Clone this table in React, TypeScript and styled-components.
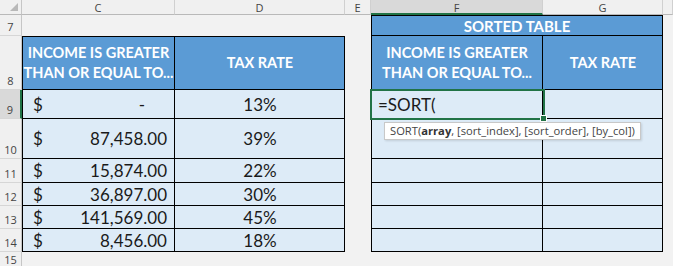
import { Fragment } from "react";
import styled, { createGlobalStyle } from "styled-components";

const GlobalStyle = createGlobalStyle`
  html, body {
    margin: 0;
    padding: 0;
    background: #f2f2f2;
  }
`;

const GREEN = "#217346";

const Sheet = styled.div`
  display: grid;
  grid-template-columns: 22px 153px 170px 26px 172px 120px 1fr;
  grid-template-rows: 15px 21px 54px 29px 40px 24px 23px 23px 23px 1fr;
  width: 673px;
  height: 266px;
  overflow: hidden;
  background: #f2f2f2;
  font-family: Lato, "Open Sans", sans-serif;
`;

const Corner = styled.div`
  background: #f0f0f0;
  border-right: 1px solid #c6c6c6;
  border-bottom: 1px solid #b9b9b9;
  position: relative;
  &::after {
    content: "";
    position: absolute;
    right: 3px;
    bottom: 3px;
    border-left: 8px solid transparent;
    border-bottom: 8px solid #b8b8b8;
  }
`;

const ColHead = styled.div<{ $sel?: boolean }>`
  display: flex;
  align-items: center;
  justify-content: center;
  font-family: "Open Sans", sans-serif;
  font-size: 11px;
  color: #444;
  background: ${(p) => (p.$sel ? "#d9d9d9" : "#f0f0f0")};
  border-right: 1px solid #d0d0d0;
  border-bottom: ${(p) => (p.$sel ? `2px solid ${GREEN}` : "1px solid #b9b9b9")};
  box-sizing: border-box;
  padding-top: ${(p) => (p.$sel ? "1px" : "0")};
`;

const RowHead = styled.div<{ $sel?: boolean }>`
  display: flex;
  align-items: flex-end;
  justify-content: center;
  padding-bottom: 1px;
  font-family: "Open Sans", sans-serif;
  font-size: 11px;
  color: #444;
  background: ${(p) => (p.$sel ? "#d9d9d9" : "#f0f0f0")};
  border-right: ${(p) => (p.$sel ? `2px solid ${GREEN}` : "1px solid #c6c6c6")};
  border-bottom: 1px solid #d6d6d6;
  box-sizing: border-box;
`;

const Blank = styled.div<{ $span?: number }>`
  grid-column: span ${(p) => p.$span ?? 1};
`;

const Cell = styled.div<{
  $head?: boolean;
  $top?: boolean;
  $left?: boolean;
  $span?: number;
  $align?: "center" | "split" | "left";
}>`
  grid-column: span ${(p) => p.$span ?? 1};
  position: relative;
  display: flex;
  align-items: center;
  justify-content: ${(p) =>
    p.$align === "split" ? "space-between" : p.$align === "left" ? "flex-start" : "center"};
  padding: 0 ${(p) => (p.$align === "center" || !p.$align ? "2px" : "8px 0 11px")};
  box-sizing: border-box;
  background: ${(p) => (p.$head ? "#5b9bd5" : "#ddebf7")};
  color: ${(p) => (p.$head ? "#fff" : "#1a1a1a")};
  font-weight: ${(p) => (p.$head ? 700 : 400)};
  font-size: ${(p) => (p.$head ? "14.5px" : "17px")};
  line-height: 20px;
  white-space: nowrap;
  text-align: center;
  box-shadow: inset -1px -1px 0 #000
    ${(p) => (p.$top ? ", inset 0 1px 0 #000" : "")}
    ${(p) => (p.$left ? ", inset 1px 0 0 #000" : "")};
`;

const Title = styled.span`
  font-size: 15px;
`;

const Dollar = styled.span``;
const Amount = styled.span<{ $dash?: boolean }>`
  margin-right: ${(p) => (p.$dash ? "22px" : "0")};
`;

const Active = styled.div`
  position: absolute;
  left: -1px;
  top: -1px;
  right: -2px;
  bottom: -1px;
  border: 2px solid ${GREEN};
  z-index: 2;
  &::after {
    content: "";
    position: absolute;
    right: -4px;
    bottom: -4px;
    width: 5px;
    height: 5px;
    background: ${GREEN};
    border: 1px solid #fff;
  }
`;

const Formula = styled.span`
  position: relative;
  z-index: 3;
  margin-left: -4px;
`;

const Tip = styled.div`
  position: absolute;
  left: 13px;
  top: 32px;
  z-index: 4;
  background: #fff;
  border: 1px solid #c8c8c8;
  box-shadow: 1px 1px 2px rgba(0, 0, 0, 0.12);
  padding: 0 5px 1px;
  font-family: "Open Sans", sans-serif;
  font-size: 11.2px;
  line-height: 15px;
  color: #444;
  font-weight: 400;
  white-space: nowrap;
  b {
    font-weight: 700;
    color: #333;
  }
`;

interface Row {
  n: number;
  amount: string;
  rate: string;
}

const rows: Row[] = [
  { n: 9, amount: "-", rate: "13%" },
  { n: 10, amount: "87,458.00", rate: "39%" },
  { n: 11, amount: "15,874.00", rate: "22%" },
  { n: 12, amount: "36,897.00", rate: "30%" },
  { n: 13, amount: "141,569.00", rate: "45%" },
  { n: 14, amount: "8,456.00", rate: "18%" },
];

function App() {
  return (
    <>
      <GlobalStyle />
      <Sheet>
        <Corner />
        <ColHead>C</ColHead>
        <ColHead>D</ColHead>
        <ColHead>E</ColHead>
        <ColHead $sel>F</ColHead>
        <ColHead>G</ColHead>
        <ColHead />

        <RowHead>7</RowHead>
        <Blank $span={3} />
        <Cell $head $top $left $span={2}>
          <Title>SORTED TABLE</Title>
        </Cell>
        <Blank />

        <RowHead>8</RowHead>
        <Cell $head $top $left>
          INCOME IS GREATER
          <br />
          THAN OR EQUAL TO...
        </Cell>
        <Cell $head $top>TAX RATE</Cell>
        <Blank />
        <Cell $head $left>
          INCOME IS GREATER
          <br />
          THAN OR EQUAL TO...
        </Cell>
        <Cell $head>TAX RATE</Cell>
        <Blank />

        {rows.map((r) => (
          <Fragment key={r.n}>
            <RowHead $sel={r.n === 9}>{r.n}</RowHead>
            <Cell $left $align="split">
              <Dollar>$</Dollar>
              <Amount $dash={r.amount === "-"}>{r.amount}</Amount>
            </Cell>
            <Cell>{r.rate}</Cell>
            <Blank />
            <Cell $left $align="left">
              {r.n === 9 && (
                <>
                  <Active />
                  <Formula>=SORT(</Formula>
                  <Tip>
                    SORT(<b>array</b>, [sort_index], [sort_order], [by_col])
                  </Tip>
                </>
              )}
            </Cell>
            <Cell />
            <Blank />
          </Fragment>
        ))}

        <RowHead>15</RowHead>
        <Blank $span={6} />
      </Sheet>
    </>
  );
}

export default App;
